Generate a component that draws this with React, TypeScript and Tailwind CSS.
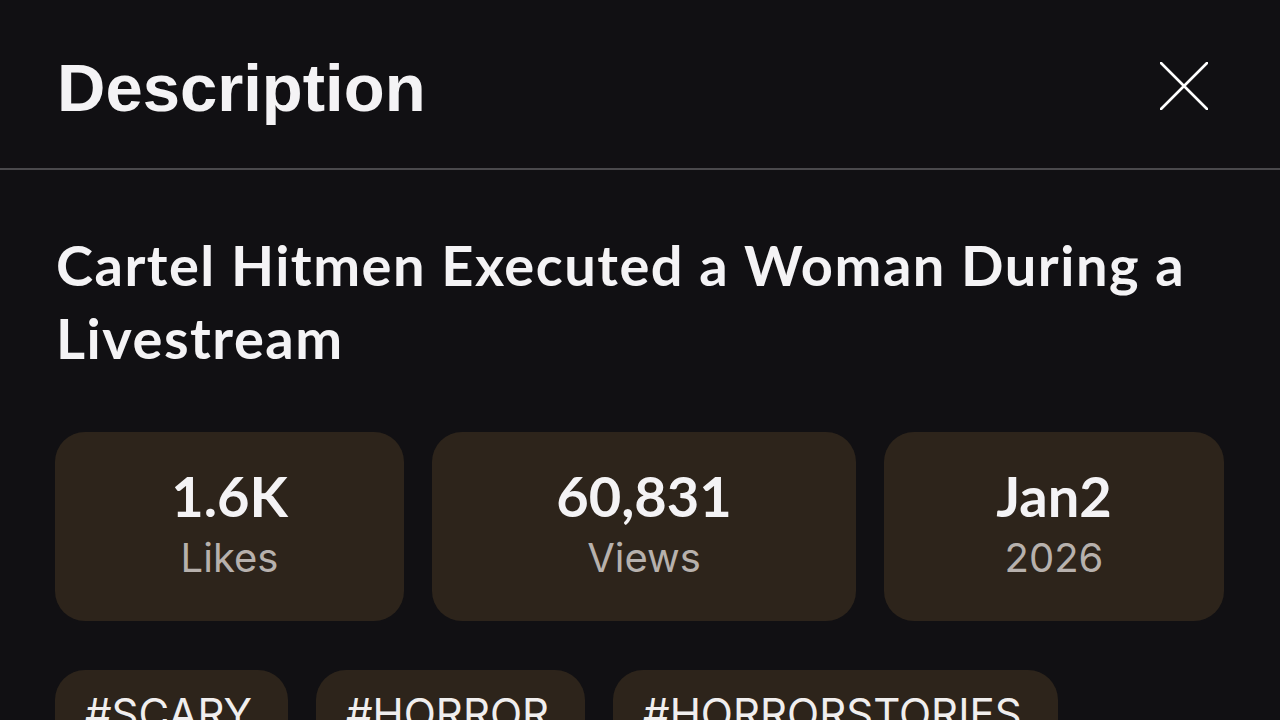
const stats = [
  { value: "1.6K", label: "Likes" },
  { value: "60,831", label: "Views" },
  { value: "Jan2", label: "2026" },
];

const tags = ["#SCARY", "#HORROR", "#HORRORSTORIES"];

export default function App() {
  return (
    <div className="w-[1280px] h-[720px] overflow-hidden bg-[#111013] text-[#f4f3f5]">
      {/* header */}
      <div className="h-[170px] flex items-center justify-between pl-[57px] pr-[72px] border-b-2 border-[#4a494c]">
        <h1 className="text-[67px] font-bold leading-none pt-[6px] font-['Liberation_Sans',Arial,sans-serif]">
          Description
        </h1>
        <svg width="48" height="48" viewBox="0 0 48 48" className="mt-[4px]">
          <path d="M1 1 L47 47 M47 1 L1 47" stroke="#fff" strokeWidth="2.6" strokeLinecap="round" />
        </svg>
      </div>

      <div className="px-[55px]">
        <h2 className="mt-[58px] ml-[1px] text-[56px] leading-[73px] font-bold font-['Lato',sans-serif] tracking-[1.5px]">
          Cartel Hitmen Executed a Woman During a Livestream
        </h2>

        <div className="mt-[58px] grid grid-cols-[349fr_424fr_340fr] gap-[28px] w-[1169px]">
          {stats.map((s) => (
            <div
              key={s.value}
              className="h-[189px] rounded-[30px] bg-[#2d241b] flex flex-col items-center pt-[34px]"
            >
              <span className="text-[56px] leading-[60px] font-bold font-['Lato',sans-serif]">
                {s.value}
              </span>
              <span className="mt-[6px] text-[40px] leading-[52px] text-[#b7b1ad] font-['Inter',sans-serif]">
                {s.label}
              </span>
            </div>
          ))}
        </div>

        <div className="mt-[49px] flex gap-[28px]">
          {tags.map((t) => (
            <div
              key={t}
              className="h-[90px] rounded-[30px] bg-[#2d241b] pl-[30px] pr-[36px] pt-[18px] text-[42px] leading-[52px] text-[#f0eeee] font-['Inter',sans-serif]"
            >
              {t}
            </div>
          ))}
        </div>
      </div>
    </div>
  );
}
